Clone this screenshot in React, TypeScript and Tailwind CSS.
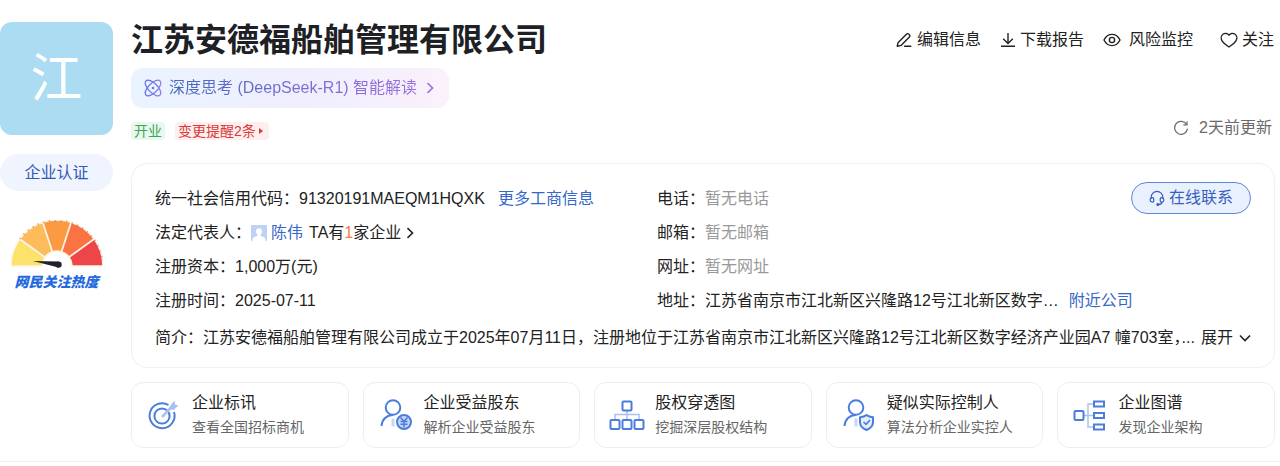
import { ReactNode } from "react";

type Feature = {
    title: string;
    desc: string;
    icon: ReactNode;
};

const EditIcon = () => (
    <svg viewBox="0 0 16 16" className="w-4 h-4" fill="none" stroke="currentColor" strokeWidth="1.4" strokeLinejoin="round" strokeLinecap="round">
        <path d="M1.2 14.2 2 10.8 10.4 2.2a1.7 1.7 0 0 1 2.5 0l.5.5a1.7 1.7 0 0 1 0 2.4L5 13.4l-3.8.8Z" />
        <path d="M8.6 14.2h6.2" />
    </svg>
);

const DownloadIcon = () => (
    <svg viewBox="0 0 16 16" className="w-4 h-4" fill="none" stroke="currentColor" strokeWidth="1.4">
        <path d="M8 1v10.4M3.2 6.8 8 11.5l4.8-4.7M1 14.2h14" />
    </svg>
);

const EyeIcon = () => (
    <svg viewBox="0 0 18 16" className="w-[18px] h-4" fill="none" stroke="currentColor" strokeWidth="1.4">
        <path d="M1 8c1.8-3.6 4.6-5.6 8-5.6S15.2 4.400 17 8c-1.8 3.6-4.6 5.6-8 5.6S2.8 11.6 1 8Z" />
        <circle cx="9" cy="8" r="2.6" />
    </svg>
);

const HeartIcon = () => (
    <svg viewBox="0 0 18 16" className="w-[18px] h-4" fill="none" stroke="currentColor" strokeWidth="1.4" strokeLinejoin="round">
        <path d="M9 3.2C7.6 1.2 5 .9 3.300 2 1 3.5.6 6.5 2 8.800 3.5 11.2 6.400 13.4 9 15c2.6-1.6 5.5-3.8 7-6.2 1.4-2.300 1-5.300-1.300-6.800C13 .9 10.400 1.200 9 3.2Z" />
    </svg>
);

const RefreshIcon = () => (
    <svg viewBox="0 0 16 16" className="w-4 h-4" fill="none" stroke="currentColor" strokeWidth="1.2">
        <path d="M13.6 4.400A6.5 6.5 0 1 0 14.5 8.600" />
        <path d="M14 1.2v3.600h-3.600" />
    </svg>
);

const AtomIcon = () => (
    <svg viewBox="0 0 18 18" className="w-[18px] h-[18px]" fill="none" stroke="url(#atom)" strokeWidth="1.3">
        <defs>
            <linearGradient id="atom" x1="0" y1="0" x2="18" y2="18" gradientUnits="userSpaceOnUse">
                <stop offset="0" stopColor="#4f74dc" />
                <stop offset="1" stopColor="#a585ee" />
            </linearGradient>
        </defs>
        <ellipse cx="9" cy="9" rx="10" ry="4.6" transform="rotate(45 9 9)" />
        <ellipse cx="9" cy="9" rx="10" ry="4.6" transform="rotate(-45 9 9)" />
        <circle cx="9" cy="9" r="1.3" fill="#6a78df" stroke="none" />
    </svg>
);

const HeadsetIcon = () => (
    <svg viewBox="0 0 16 16" className="w-4 h-4" fill="none" stroke="currentColor" strokeWidth="1.2">
        <path d="M2.2 9V7.2a5.8 5.8 0 0 1 11.6 0V9" />
        <path d="M2.6 7.8c1.8-.6 2.2.4 2.2 2.2s-.6 2.6-2 2C.6 11.400.6 8.600 2.600 7.800ZM13.4 7.8c-1.8-.6-2.2.4-2.2 2.2s.6 2.6 2 2c2.2-.6 2.2-3.4.2-4.2Z" />
        <path d="M13.2 12c-.4 1.6-1.8 2.6-4 2.6" />
        <circle cx="8.8" cy="14.4" r=".9" fill="currentColor" />
    </svg>
);

const Chevron = ({ down = false }: { down?: boolean }) => (
    <svg viewBox="0 0 12 12" className="w-3 h-3" fill="none" stroke="currentColor" strokeWidth="1.6">
        <path d={down ? "M1 3.5 6 8.5 11 3.5" : "M3.5 1.2 8.5 6 3.5 10.8"} />
    </svg>
);

const PersonAvatar = () => (
    <svg viewBox="0 0 16 16" className="w-4 h-4">
        <rect width="16" height="16" rx="1" fill="#bed1f7" />
        <ellipse cx="8" cy="6.5" rx="2.9" ry="3.3" fill="#fff" />
        <path d="M6.5 9h3v1.8l4 1.8c.8.4 1 1.4 1 3.4h-13c0-2 .2-3 1-3.4l4-1.8Z" fill="#fff" />
    </svg>
);

const Gauge = () => (
    <svg viewBox="0 0 92 50" className="w-[92px] h-[50px]">
        <g stroke="#fff3e4" strokeWidth="1.6">
            <path d="M0 46A46 46 0 0 1 8.8 19L34 37.2A15 15 0 0 0 31 46Z" fill="#fbe26a" />
            <path d="M8.8 19A46 46 0 0 1 31.8 2.3L41.4 31.7A15 15 0 0 0 33.9 37.2Z" fill="#fcbc5c" />
            <path d="M31.8 2.3A46 46 0 0 1 60.2 2.3L50.6 31.7A15 15 0 0 0 41.4 31.7Z" fill="#fb9a42" />
            <path d="M60.2 2.3A46 46 0 0 1 83.2 19L58.1 37.2A15 15 0 0 0 50.6 31.7Z" fill="#fb7343" />
            <path d="M83.2 19A46 46 0 0 1 92 46H61A15 15 0 0 0 58.1 37.2Z" fill="#ee4648" />
        </g>
        <path d="M8.8 19A46 46 0 0 1 91 38" fill="none" stroke="#a0522d" strokeOpacity=".45" strokeWidth="2" strokeDasharray="1.2 4.6" />
        <path d="M22 41 47.500 41.600v6Z" fill="#20222a" />
        <circle cx="47.5" cy="44.6" r="3.2" fill="#20222a" />
    </svg>
);

const TargetIcon = () => (
    <svg viewBox="0 0 36 36" className="w-9 h-9" fill="none" stroke="#4a7ddd" strokeWidth="2">
        <path d="M22.5 8A12.500 12.500 0 1 0 28 15" />
        <circle cx="16" cy="19" r="7.6" />
        <path d="M16 20 27.500 8" stroke="#a9c1f2" strokeWidth="2.6" />
        <path d="m24 9 4.5-5.500.5 4 3.500 1L27.500 13l-3-.5Z" fill="#a9c1f2" stroke="none" />
    </svg>
);

const Person = () => (
    <>
        <circle cx="15" cy="10.5" r="7.3" />
        <path d="M3.5 29C4 22.500 8.5 18 15 18" />
        <path d="M15 21.500v8" stroke="#c5d6f8" strokeWidth="3" />
    </>
);

const BeneficiaryIcon = () => (
    <svg viewBox="0 0 36 36" className="w-9 h-9" fill="none" stroke="#4a7ddd" strokeWidth="2">
        <Person />
        <circle cx="26" cy="25" r="7" fill="#c5d6f8" />
        <path d="m22.500 20.500 3.500 3.800 3.500-3.800M26 24.300v6.200M22.500 24.500h7M22.500 27.300h7" strokeWidth="1.5" />
    </svg>
);

const ControllerIcon = () => (
    <svg viewBox="0 0 36 36" className="w-9 h-9" fill="none" stroke="#4a7ddd" strokeWidth="2">
        <Person />
        <path d="M25.500 18c2 1.600 4 2 6.500 2.200v5.300c0 4-3 6-6.500 7.500C22 31.500 19 29.500 19 25.500v-5.300c2.500-.2 4.500-.6 6.500-2.200Z" fill="#e4edfd" strokeLinejoin="round" />
        <path d="m22.500 25 2.500 2.300 4-4.300" strokeWidth="1.6" />
    </svg>
);

const TreeIcon = () => (
    <svg viewBox="0 0 36 36" className="w-9 h-9" fill="none" stroke="#4a7ddd" strokeWidth="2">
        <path d="M18 13v10M6 23v-5.500h24V23" stroke="#a9c1f2" strokeWidth="1.5" />
        <rect x="13.5" y="4.5" width="9" height="9" rx="1" />
        <rect x="1.5" y="23" width="9" height="9" rx="1" />
        <rect x="13.5" y="23" width="9" height="9" rx="1" />
        <rect x="25.5" y="23" width="9" height="9" rx="1" />
    </svg>
);

const GraphIcon = () => (
    <svg viewBox="0 0 36 36" className="w-9 h-9" fill="none" stroke="#4a7ddd" strokeWidth="2">
        <path d="M12 18.500h10M22 7h-6v23h6" stroke="#a9c1f2" strokeWidth="1.5" />
        <rect x="2.5" y="14" width="9" height="9" rx="1" />
        <rect x="22" y="4.500" width="10" height="5" />
        <rect x="22" y="16" width="10" height="5" />
        <rect x="22" y="27.500" width="10" height="5" />
    </svg>
);

const features: Feature[] = [
    { title: "企业标讯", desc: "查看全国招标商机", icon: <TargetIcon /> },
    { title: "企业受益股东", desc: "解析企业受益股东", icon: <BeneficiaryIcon /> },
    { title: "股权穿透图", desc: "挖掘深层股权结构", icon: <TreeIcon /> },
    { title: "疑似实际控制人", desc: "算法分析企业实控人", icon: <ControllerIcon /> },
    { title: "企业图谱", desc: "发现企业架构", icon: <GraphIcon /> },
];

const Row = ({ label, children }: { label: string; children: ReactNode }) => (
    <div className="flex items-center h-[34px] whitespace-nowrap">
        <dt>{label}：</dt>
        <dd className="flex items-center min-w-0">{children}</dd>
    </div>
);

export default function App() {
    return (
        <div className="bg-white text-[#222] text-base leading-6 font-['Liberation_Sans','Noto_Sans_CJK_SC',sans-serif]">
            <div className="flex gap-[18px] pr-[5px] pb-[13px] border-b border-[#eaf0f6]">
                {/* Logo e selos da empresa */}
                <aside className="w-[113px] shrink-0 pt-[22px] flex flex-col items-center">
                    <div className="w-full h-[113px] rounded-xl bg-[#abdcf2] text-white text-[52px] leading-none flex items-center justify-center">江</div>
                    <button type="button" className="mt-[19px] w-full h-[37px] rounded-full bg-[#f0f4ff] text-[#3359b5]">
                        企业认证
                    </button>
                    <a href="#" className="mt-[29px] flex flex-col items-center">
                        <Gauge />
                        <span className="text-sm leading-6 font-black italic text-[#2468e0]">网民关注热度</span>
                    </a>
                </aside>

                <main className="flex-1 min-w-0">
                    <header className="flex justify-between pt-5">
                        <div>
                            <h1 className="text-[32px] leading-10 font-bold text-[#1d2125]">江苏安德福船舶管理有限公司</h1>
                            <button type="button" className="mt-2 h-10 px-[13px] rounded-xl flex items-center gap-[7px] bg-linear-to-r from-[#e9f4fe] via-[#efeefd] to-[#faf1fb]">
                                <AtomIcon />
                                <span className="bg-linear-to-r from-[#4668c0] to-[#9c70e0] bg-clip-text text-transparent">深度思考 (DeepSeek-R1) 智能解读</span>
                                <span className="text-[#9c70e0]"><Chevron /></span>
                            </button>
                            <div className="mt-3.5 flex gap-2.5 text-sm leading-[18px]">
                                <span className="px-[3px] rounded-sm bg-[#e8f8ed] text-[#3da55c]">开业</span>
                                <a href="#" className="px-[3px] rounded-sm bg-[#feeeee] text-[#d93a3a] flex items-center gap-[3px]">
                                    变更提醒2条
                                    <svg viewBox="0 0 4 6" className="w-1 h-1.5 mr-[3px]" fill="currentColor"><path d="M0 0 4 3 0 6Z" /></svg>
                                </a>
                            </div>
                        </div>
                        <div className="flex flex-col items-end justify-between pt-2">
                            <nav className="flex gap-[19px] pr-px">
                                <button type="button" className="flex items-center gap-[5px]"><EditIcon />编辑信息</button>
                                <button type="button" className="flex items-center gap-1"><DownloadIcon />下载报告</button>
                                <button type="button" className="flex items-center gap-2"><EyeIcon />风险监控</button>
                                <button type="button" className="flex items-center gap-1 ml-2"><HeartIcon />关注</button>
                            </nav>
                            <button type="button" className="flex items-center gap-2.5 text-[#6b6b6b] pr-[3px]"><RefreshIcon />2天前更新</button>
                        </div>
                    </header>

                    {/* Dados cadastrais */}
                    <section className="mt-[23px] rounded-2xl border border-[#eef0f2] px-[23px] pt-[18px] pb-3">
                        <div className="grid grid-cols-[502px_1fr]">
                            <dl>
                                <Row label="统一社会信用代码">
                                    91320191MAEQM1HQXK
                                    <a href="#" className="ml-[13px] text-[#3567c8]">更多工商信息</a>
                                </Row>
                                <Row label="法定代表人">
                                    <PersonAvatar />
                                    <a href="#" className="ml-1 text-[#3567c8]">陈伟</a>
                                    <a href="#" className="ml-1.5 flex items-center">
                                        TA有<span className="text-[#f0803c]">1</span>家企业
                                        <span className="ml-[3px]"><Chevron /></span>
                                    </a>
                                </Row>
                                <Row label="注册资本">1,000万(元)</Row>
                                <Row label="注册时间">2025-07-11</Row>
                            </dl>
                            <div className="flex justify-between items-start min-w-0">
                                <dl className="min-w-0">
                                    <Row label="电话"><span className="text-[#999]">暂无电话</span></Row>
                                    <Row label="邮箱"><span className="text-[#999]">暂无邮箱</span></Row>
                                    <Row label="网址"><span className="text-[#999]">暂无网址</span></Row>
                                    <Row label="地址">
                                        江苏省南京市江北新区兴隆路12号江北新区数字…
                                        <a href="#" className="ml-2.5 text-[#3567c8]">附近公司</a>
                                    </Row>
                                </dl>
                                <button type="button" className="h-8 px-[17px] shrink-0 rounded-full border border-[#5f86d8] bg-[#eaf1fe] text-[#3860bd] flex items-center gap-1">
                                    <HeadsetIcon />
                                    在线联系
                                </button>
                            </div>
                        </div>
                        <div className="mt-[3px] flex items-center justify-between h-[34px] whitespace-nowrap">
                            <p>
                                简介：江苏安德福船舶管理有限公司成立于2025年07月11日，注册地位于江苏省南京市江北新区兴隆路12号江北新区数字经济产业园A7 幢703室<span className="[font-feature-settings:'halt']">，</span>...
                            </p>
                            <button type="button" className="flex items-center gap-1.5 shrink-0">展开<Chevron down /></button>
                        </div>
                    </section>

                    {/* Atalhos */}
                    <section className="mt-3.5 grid grid-cols-5 gap-3.5">
                        {features.map((item) => (
                            <a key={item.title} href="#" className="h-[66px] pl-3.5 rounded-xl border border-[#eceef1] flex items-center gap-2.5 whitespace-nowrap">
                                {item.icon}
                                <div>
                                    <h3 className="leading-6">{item.title}</h3>
                                    <p className="text-sm leading-6 text-[#666]">{item.desc}</p>
                                </div>
                            </a>
                        ))}
                    </section>
                </main>
            </div>
        </div>
    );
}
